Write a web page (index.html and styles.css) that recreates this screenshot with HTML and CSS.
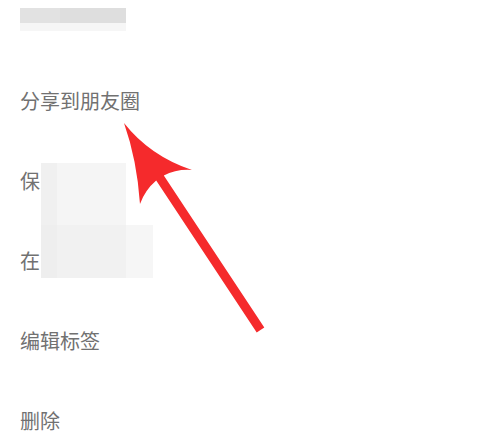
FILE: index.html
```html
<!DOCTYPE html>
<html lang="zh-CN">
<head>
<meta charset="utf-8">
<link rel="stylesheet" href="styles.css">
</head>
<body>
<div class="page">
  <div class="header">
    <div class="blur-top"></div>
    <div class="blur-bottom"></div>
  </div>
  <ul class="menu">
    <li class="item">分享到朋友圈</li>
    <li class="item">保</li>
    <li class="item">在</li>
    <li class="item">编辑标签</li>
    <li class="item">删除</li>
  </ul>
  <div class="mosaic mosaic-a"><span class="m-strip"></span></div>
  <div class="mosaic mosaic-b"><span class="m-strip"></span><span class="m-right"></span></div>
  <svg class="arrow" width="481" height="445" viewBox="0 0 481 445">
    <path d="M124,123 Q150,156 192,170 Q176,169 163.8,175.5 L264.3,327.5 L256.7,332.5 L156.2,180.5 Q145,190 140,204 Q137,160 124,123 Z" fill="#f52a2c"/>
  </svg>
</div>
</body>
</html>
```

FILE: styles.css
```css
html, body {
  margin: 0;
  padding: 0;
  background: #ffffff;
}
.page {
  position: relative;
  width: 481px;
  height: 445px;
  overflow: hidden;
  font-family: "Noto Sans CJK SC", "Noto Sans", sans-serif;
}
.header {
  padding: 8px 0 0 20px;
  height: 61px;
  box-sizing: border-box;
}
.blur-top {
  width: 106px;
  height: 15px;
  background: linear-gradient(90deg, #e2e2e2 0, #e2e2e2 38%, #dedede 38%, #dedede 100%);
}
.blur-bottom {
  width: 106px;
  height: 8px;
  background: #f6f6f6;
}
.menu {
  list-style: none;
  margin: 0;
  padding: 0;
}
.item {
  height: 80px;
  display: flex;
  align-items: center;
  padding-left: 20px;
  font-size: 20px;
  line-height: 20px;
  color: #717171;
}
.mosaic {
  position: absolute;
  display: flex;
}
.mosaic-a {
  left: 41px;
  top: 163px;
  width: 85px;
  height: 62px;
  background: #f5f5f5;
}
.mosaic-b {
  left: 41px;
  top: 225px;
  width: 112px;
  height: 53px;
  background: #f1f1f1;
}
.m-strip {
  width: 16px;
  height: 100%;
  background: #f0f0f0;
}
.mosaic-b .m-strip {
  background: #eeeeee;
}
.m-right {
  margin-left: auto;
  width: 27px;
  height: 100%;
  background: #f6f6f6;
}
.arrow {
  position: absolute;
  left: 0;
  top: 0;
}
```
